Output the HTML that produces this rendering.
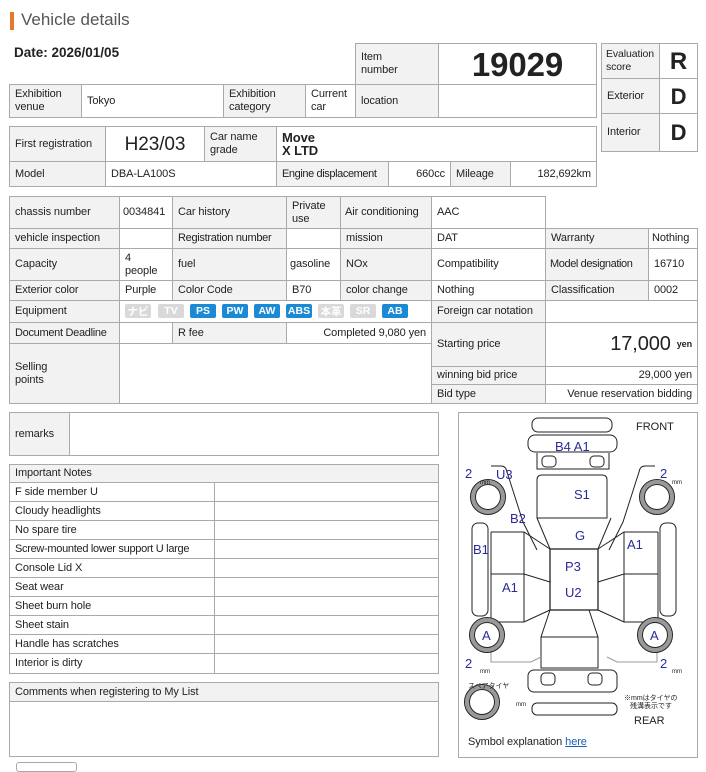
<!DOCTYPE html>
<html><head><meta charset="utf-8"><style>
*{box-sizing:border-box;margin:0;padding:0}
body{width:706px;height:766px;background:#fff;position:relative;overflow:hidden;font-family:"Liberation Sans","Noto Sans CJK JP",sans-serif;font-size:11px;color:#222}
.c{position:absolute;border:1px solid #aaa;display:flex;align-items:center;padding:0 5px;line-height:13px;background:#fff;white-space:nowrap;letter-spacing:-0.1px}
.g{background:#f2f2f2}
.r{justify-content:flex-end}
.ctr{justify-content:center}
.b{position:absolute;top:304px;width:26px;height:14px;border-radius:2px;color:#fff;font-size:10.5px;font-weight:bold;display:flex;align-items:center;justify-content:center}
.bl{background:#1a8ad4}.gr{background:#d9d9d9}
</style></head><body>
<div style="position:absolute;left:10px;top:12px;width:4px;height:18px;background:#e8772e"></div>
<div style="position:absolute;left:21px;top:10px;font-size:17px;color:#555">Vehicle details</div>
<div style="position:absolute;left:14px;top:45px;font-size:13.5px;font-weight:bold">Date: 2026/01/05</div>

<div class="c g" style="left:355px;top:43px;width:84px;height:42px">Item<br>number</div>
<div class="c ctr" style="left:438px;top:43px;width:159px;height:42px;font-size:33px;font-weight:bold">19029</div>
<div class="c g" style="left:9px;top:84px;width:73px;height:34px">Exhibition<br>venue</div>
<div class="c" style="left:81px;top:84px;width:143px;height:34px">Tokyo</div>
<div class="c g" style="left:223px;top:84px;width:83px;height:34px">Exhibition<br>category</div>
<div class="c" style="left:305px;top:84px;width:51px;height:34px">Current<br>car</div>
<div class="c g" style="left:355px;top:84px;width:84px;height:34px">location</div>
<div class="c" style="left:438px;top:84px;width:159px;height:34px"></div>

<div class="c g" style="left:601px;top:43px;width:59px;height:36px;font-size:10.5px;padding:0 4px">Evaluation<br>score</div>
<div class="c ctr" style="left:659px;top:43px;width:39px;height:36px;font-size:24px;font-weight:bold">R</div>
<div class="c g" style="left:601px;top:78px;width:59px;height:36px">Exterior</div>
<div class="c ctr" style="left:659px;top:78px;width:39px;height:36px;font-size:22px;font-weight:bold">D</div>
<div class="c g" style="left:601px;top:113px;width:59px;height:39px;align-items:flex-start;padding-top:12px">Interior</div>
<div class="c ctr" style="left:659px;top:113px;width:39px;height:39px;font-size:22px;font-weight:bold">D</div>

<div class="c g" style="left:9px;top:126px;width:97px;height:36px">First registration</div>
<div class="c ctr" style="left:105px;top:126px;width:100px;height:36px;font-size:19px">H23/03</div>
<div class="c g" style="left:204px;top:126px;width:73px;height:36px">Car name<br>grade</div>
<div class="c" style="left:276px;top:126px;width:321px;height:36px;font-weight:bold;font-size:13px">Move<br>X LTD</div>
<div class="c g" style="left:9px;top:161px;width:97px;height:26px">Model</div>
<div class="c" style="left:105px;top:161px;width:172px;height:26px">DBA-LA100S</div>
<div class="c g" style="left:276px;top:161px;width:113px;height:26px;letter-spacing:-0.4px">Engine displacement</div>
<div class="c r" style="left:388px;top:161px;width:63px;height:26px">660cc</div>
<div class="c g" style="left:450px;top:161px;width:61px;height:26px">Mileage</div>
<div class="c r" style="left:510px;top:161px;width:87px;height:26px">182,692km</div>

<div class="c g" style="left:9px;top:196px;width:111px;height:33px">chassis number</div>
<div class="c" style="left:119px;top:196px;width:54px;height:33px;padding:0 3px">0034841</div>
<div class="c g" style="left:172px;top:196px;width:115px;height:33px">Car history</div>
<div class="c g" style="left:286px;top:196px;width:55px;height:33px">Private<br>use</div>
<div class="c g" style="left:340px;top:196px;width:92px;height:33px;padding:0 4px">Air conditioning</div>
<div class="c" style="left:431px;top:196px;width:115px;height:33px">AAC</div>

<div class="c g" style="left:9px;top:228px;width:111px;height:21px">vehicle inspection</div>
<div class="c" style="left:119px;top:228px;width:54px;height:21px"></div>
<div class="c g" style="left:172px;top:228px;width:115px;height:21px;letter-spacing:-0.3px">Registration number</div>
<div class="c" style="left:286px;top:228px;width:55px;height:21px"></div>
<div class="c g" style="left:340px;top:228px;width:92px;height:21px">mission</div>
<div class="c" style="left:431px;top:228px;width:115px;height:21px">DAT</div>
<div class="c g" style="left:545px;top:228px;width:104px;height:21px">Warranty</div>
<div class="c" style="left:648px;top:228px;width:50px;height:21px;padding:0 3px">Nothing</div>

<div class="c g" style="left:9px;top:248px;width:111px;height:33px">Capacity</div>
<div class="c" style="left:119px;top:248px;width:54px;height:33px">4<br>people</div>
<div class="c g" style="left:172px;top:248px;width:115px;height:33px">fuel</div>
<div class="c" style="left:286px;top:248px;width:55px;height:33px;padding:0 3px">gasoline</div>
<div class="c g" style="left:340px;top:248px;width:92px;height:33px">NOx</div>
<div class="c" style="left:431px;top:248px;width:115px;height:33px">Compatibility</div>
<div class="c g" style="left:545px;top:248px;width:104px;height:33px;letter-spacing:-0.4px;padding:0 4px">Model designation</div>
<div class="c" style="left:648px;top:248px;width:50px;height:33px">16710</div>

<div class="c g" style="left:9px;top:280px;width:111px;height:21px">Exterior color</div>
<div class="c" style="left:119px;top:280px;width:54px;height:21px">Purple</div>
<div class="c g" style="left:172px;top:280px;width:115px;height:21px">Color Code</div>
<div class="c" style="left:286px;top:280px;width:55px;height:21px">B70</div>
<div class="c g" style="left:340px;top:280px;width:92px;height:21px">color change</div>
<div class="c" style="left:431px;top:280px;width:115px;height:21px">Nothing</div>
<div class="c g" style="left:545px;top:280px;width:104px;height:21px">Classification</div>
<div class="c" style="left:648px;top:280px;width:50px;height:21px">0002</div>

<div class="c g" style="left:9px;top:300px;width:111px;height:23px">Equipment</div>
<div class="c" style="left:119px;top:300px;width:313px;height:23px"></div>
<div class="c g" style="left:431px;top:300px;width:115px;height:23px">Foreign car notation</div>
<div class="c" style="left:545px;top:300px;width:153px;height:23px"></div>
<div class="b gr" style="left:125px">ナビ</div><div class="b gr" style="left:158px">TV</div><div class="b bl" style="left:190px">PS</div><div class="b bl" style="left:222px">PW</div><div class="b bl" style="left:254px">AW</div><div class="b bl" style="left:286px">ABS</div><div class="b gr" style="left:318px">本革</div><div class="b gr" style="left:350px">SR</div><div class="b bl" style="left:382px">AB</div>

<div class="c g" style="left:9px;top:322px;width:111px;height:22px;letter-spacing:-0.3px">Document Deadline</div>
<div class="c" style="left:119px;top:322px;width:54px;height:22px"></div>
<div class="c g" style="left:172px;top:322px;width:115px;height:22px">R fee</div>
<div class="c r" style="left:286px;top:322px;width:146px;height:22px">Completed 9,080 yen</div>
<div class="c g" style="left:9px;top:343px;width:111px;height:61px;white-space:normal">Selling<br>points</div>
<div class="c" style="left:119px;top:343px;width:313px;height:61px"></div>
<div class="c g" style="left:431px;top:322px;width:115px;height:45px">Starting price</div>
<div class="c r" style="left:545px;top:322px;width:153px;height:45px"><span style="font-size:20px">17,000</span><span style="font-size:9px;font-weight:bold;margin-left:6px">yen</span></div>
<div class="c g" style="left:431px;top:366px;width:115px;height:19px">winning bid price</div>
<div class="c r" style="left:545px;top:366px;width:153px;height:19px">29,000 yen</div>
<div class="c g" style="left:431px;top:384px;width:115px;height:20px">Bid type</div>
<div class="c r" style="left:545px;top:384px;width:153px;height:20px">Venue reservation bidding</div>

<div class="c g" style="left:9px;top:412px;width:61px;height:44px">remarks</div>
<div class="c" style="left:69px;top:412px;width:370px;height:44px"></div>

<div class="c g" style="left:9px;top:464px;width:430px;height:19px">Important Notes</div>
<div class="c" style="left:9px;top:482px;width:206px;height:20px">F side member U</div><div class="c" style="left:214px;top:482px;width:225px;height:20px"></div>
<div class="c" style="left:9px;top:501px;width:206px;height:20px">Cloudy headlights</div><div class="c" style="left:214px;top:501px;width:225px;height:20px"></div>
<div class="c" style="left:9px;top:520px;width:206px;height:20px">No spare tire</div><div class="c" style="left:214px;top:520px;width:225px;height:20px"></div>
<div class="c" style="left:9px;top:539px;width:206px;height:20px;letter-spacing:-0.3px">Screw-mounted lower support U large</div><div class="c" style="left:214px;top:539px;width:225px;height:20px"></div>
<div class="c" style="left:9px;top:558px;width:206px;height:20px">Console Lid X</div><div class="c" style="left:214px;top:558px;width:225px;height:20px"></div>
<div class="c" style="left:9px;top:577px;width:206px;height:20px">Seat wear</div><div class="c" style="left:214px;top:577px;width:225px;height:20px"></div>
<div class="c" style="left:9px;top:596px;width:206px;height:20px">Sheet burn hole</div><div class="c" style="left:214px;top:596px;width:225px;height:20px"></div>
<div class="c" style="left:9px;top:615px;width:206px;height:20px">Sheet stain</div><div class="c" style="left:214px;top:615px;width:225px;height:20px"></div>
<div class="c" style="left:9px;top:634px;width:206px;height:20px">Handle has scratches</div><div class="c" style="left:214px;top:634px;width:225px;height:20px"></div>
<div class="c" style="left:9px;top:653px;width:206px;height:21px">Interior is dirty</div><div class="c" style="left:214px;top:653px;width:225px;height:21px"></div>

<div class="c g" style="left:9px;top:682px;width:430px;height:20px">Comments when registering to My List</div>
<div class="c" style="left:9px;top:701px;width:430px;height:56px"></div>
<div style="position:absolute;left:16px;top:762px;width:61px;height:10px;border:1px solid #aaa;border-radius:3px"></div>

<div class="c" style="left:458px;top:412px;width:240px;height:346px;align-items:flex-end;padding-bottom:8px;padding-left:9px"><span>Symbol explanation <span style="color:#1a5fb4;text-decoration:underline">here</span></span></div>
<svg style="position:absolute;left:0;top:0" width="706" height="766" fill="none" stroke="#222" stroke-width="1">
<rect x="532" y="418" width="80" height="14" rx="6"/>
<rect x="528" y="435" width="89" height="17" rx="7"/>
<rect x="542" y="456" width="14" height="11" rx="4"/><rect x="590" y="456" width="14" height="11" rx="4"/>
<path d="M537 453v16h72v-16"/>
<path d="M542 475h60q5 0 5 5v38h-70v-38q0-5 5-5z"/>
<path d="M537 518l13 31h48l13-31"/>
<rect x="550" y="549" width="48" height="61" stroke-width="1.3"/>
<path d="M491 532h33l26 17M491 574h33l26 8M491 622h33l26-12M491 532v90M524 532v90"/>
<path d="M658 532h-34l-26 17M658 574h-34l-26 8M658 622h-34l-26-12M658 532v90M624 532v90"/>
<rect x="472" y="523" width="16" height="93" rx="6"/><rect x="660" y="523" width="16" height="93" rx="6"/>
<path d="M491 466h10q5 0 6 6l16 50 14 28M655 466h-10q-5 0-6 6l-16 50-14 28"/>
<path d="M550 610l-9 27v31h57v-31l-9-27M541 637h57"/>
<path d="M491 650v12h40l10-5M657 650v12h-40l-10-5" stroke="#999"/>
<rect x="528" y="670" width="89" height="22" rx="6"/><rect x="541" y="673" width="14" height="12" rx="4"/><rect x="588" y="673" width="14" height="12" rx="4"/>
<rect x="532" y="703" width="85" height="12" rx="5"/>
<g stroke="#999" stroke-width="4"><circle cx="488" cy="497" r="15"/><circle cx="657" cy="497" r="15"/><circle cx="487" cy="635" r="15"/><circle cx="655" cy="635" r="15"/><circle cx="482" cy="702" r="15"/></g>
<g><circle cx="488" cy="497" r="17.5"/><circle cx="488" cy="497" r="12.5"/><circle cx="657" cy="497" r="17.5"/><circle cx="657" cy="497" r="12.5"/><circle cx="487" cy="635" r="17.5"/><circle cx="487" cy="635" r="12.5"/><circle cx="655" cy="635" r="17.5"/><circle cx="655" cy="635" r="12.5"/><circle cx="482" cy="702" r="17.5"/><circle cx="482" cy="702" r="12.5"/></g>
<g fill="#2a2a9a" stroke="none" font-family="Liberation Sans,sans-serif" font-size="13">
<text x="555" y="451">B4 A1</text><text x="465" y="478">2</text><text x="496" y="479">U3</text><text x="574" y="499">S1</text><text x="510" y="523">B2</text><text x="575" y="540">G</text><text x="473" y="554">B1</text><text x="627" y="549">A1</text><text x="565" y="571">P3</text><text x="502" y="592">A1</text><text x="565" y="597">U2</text><text x="482" y="640">A</text><text x="650" y="640">A</text><text x="465" y="668">2</text><text x="660" y="668">2</text><text x="660" y="478">2</text>
</g>
<g fill="#222" stroke="none" font-family="Liberation Sans,Noto Sans CJK JP,sans-serif">
<text x="636" y="430" font-size="11">FRONT</text><text x="634" y="724" font-size="11">REAR</text>
<text x="468" y="688" font-size="7">スペアタイヤ</text><text x="624" y="700" font-size="7">※mmはタイヤの</text><text x="630" y="708" font-size="7">残溝表示です</text>
<text x="480" y="484" font-size="6">mm</text><text x="672" y="484" font-size="6">mm</text><text x="480" y="673" font-size="6">mm</text><text x="672" y="673" font-size="6">mm</text><text x="516" y="706" font-size="6">mm</text>
</g>
</svg>
</body></html>
